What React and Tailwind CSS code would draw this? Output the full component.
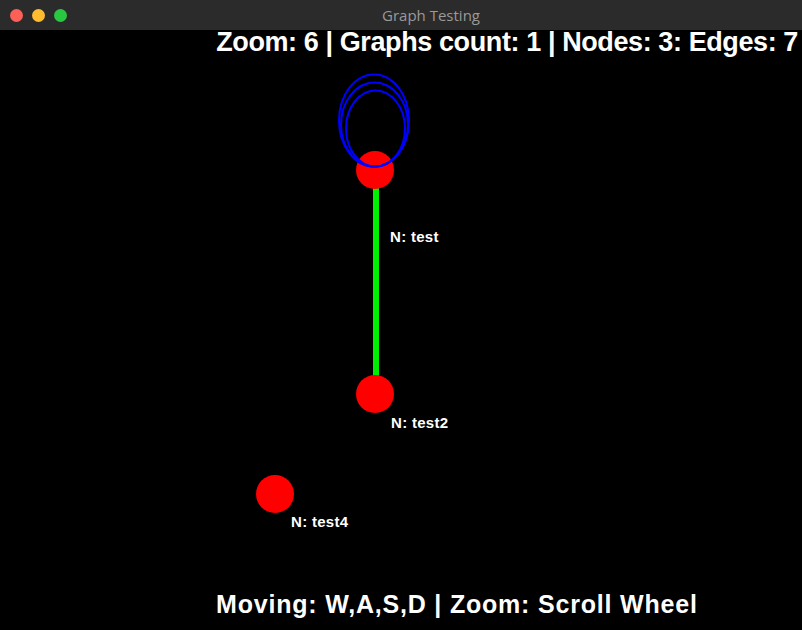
import React from 'react';

const nodes = [
  { id: 'test', x: 375, y: 170, lx: 390, ly: 242 },
  { id: 'test2', x: 375, y: 394, lx: 391, ly: 428 },
  { id: 'test4', x: 275, y: 494, lx: 291, ly: 527 },
];

// self loops on node "test"
const loops = [
  { cx: 374, cy: 120.5, rx: 35, ry: 46 },
  { cx: 374.5, cy: 124.5, rx: 33.5, ry: 42 },
  { cx: 375.5, cy: 128.5, rx: 29.5, ry: 38 },
];

function TitleBar() {
  return (
    <div className="relative flex h-[30px] items-center bg-[#2b2b2b]">
      <div className="flex items-center gap-[9px] pl-[10px]">
        <span className="h-[13px] w-[13px] rounded-full bg-[#fe5f57]" />
        <span className="h-[13px] w-[13px] rounded-full bg-[#febc2e]" />
        <span className="h-[13px] w-[13px] rounded-full bg-[#28c840]" />
      </div>
      <div className="absolute inset-0 flex items-center justify-center pl-[60px] text-[15px] text-[#9a9a9a] font-['Open_Sans',sans-serif]">
        Graph Testing
      </div>
    </div>
  );
}

function Graph() {
  return (
    <svg className="absolute left-0 top-[-30px]" width="802" height="630">
      <line x1="376" y1="172" x2="376" y2="378" stroke="#00ee00" strokeWidth="6" />
      {nodes.map((n) => (
        <circle key={n.id} cx={n.x} cy={n.y} r="19" fill="#ff0000" />
      ))}
      {loops.map((l, i) => (
        <ellipse key={i} cx={l.cx} cy={l.cy} rx={l.rx} ry={l.ry} fill="none" stroke="#0000ff" strokeWidth="2" />
      ))}
      {nodes.map((n) => (
        <text
          key={n.id + 'l'}
          x={n.lx}
          y={n.ly}
          fill="#ffffff"
          fontSize="15"
          fontWeight="700"
          letterSpacing="0.3"
          fontFamily="Liberation Sans, Arial, sans-serif"
        >
          N: {n.id}
        </text>
      ))}
    </svg>
  );
}

export default function App() {
  return (
    <div className="flex h-[630px] w-[802px] flex-col overflow-hidden bg-black font-['Liberation_Sans',Arial,sans-serif]">
      <TitleBar />
      <div className="relative flex flex-1 flex-col justify-between">
        <Graph />
        <div className="relative flex justify-end pr-[4px] text-[27px] leading-[25px] tracking-[-0.4px] font-bold text-white">
          Zoom: 6 | Graphs count: 1 | Nodes: 3: Edges: 7
        </div>
        <div className="relative flex pb-[12px] pl-[216px] text-[25px] leading-[28px] tracking-[0.8px] font-bold text-white">
          Moving: W,A,S,D | Zoom: Scroll Wheel
        </div>
      </div>
    </div>
  );
}
